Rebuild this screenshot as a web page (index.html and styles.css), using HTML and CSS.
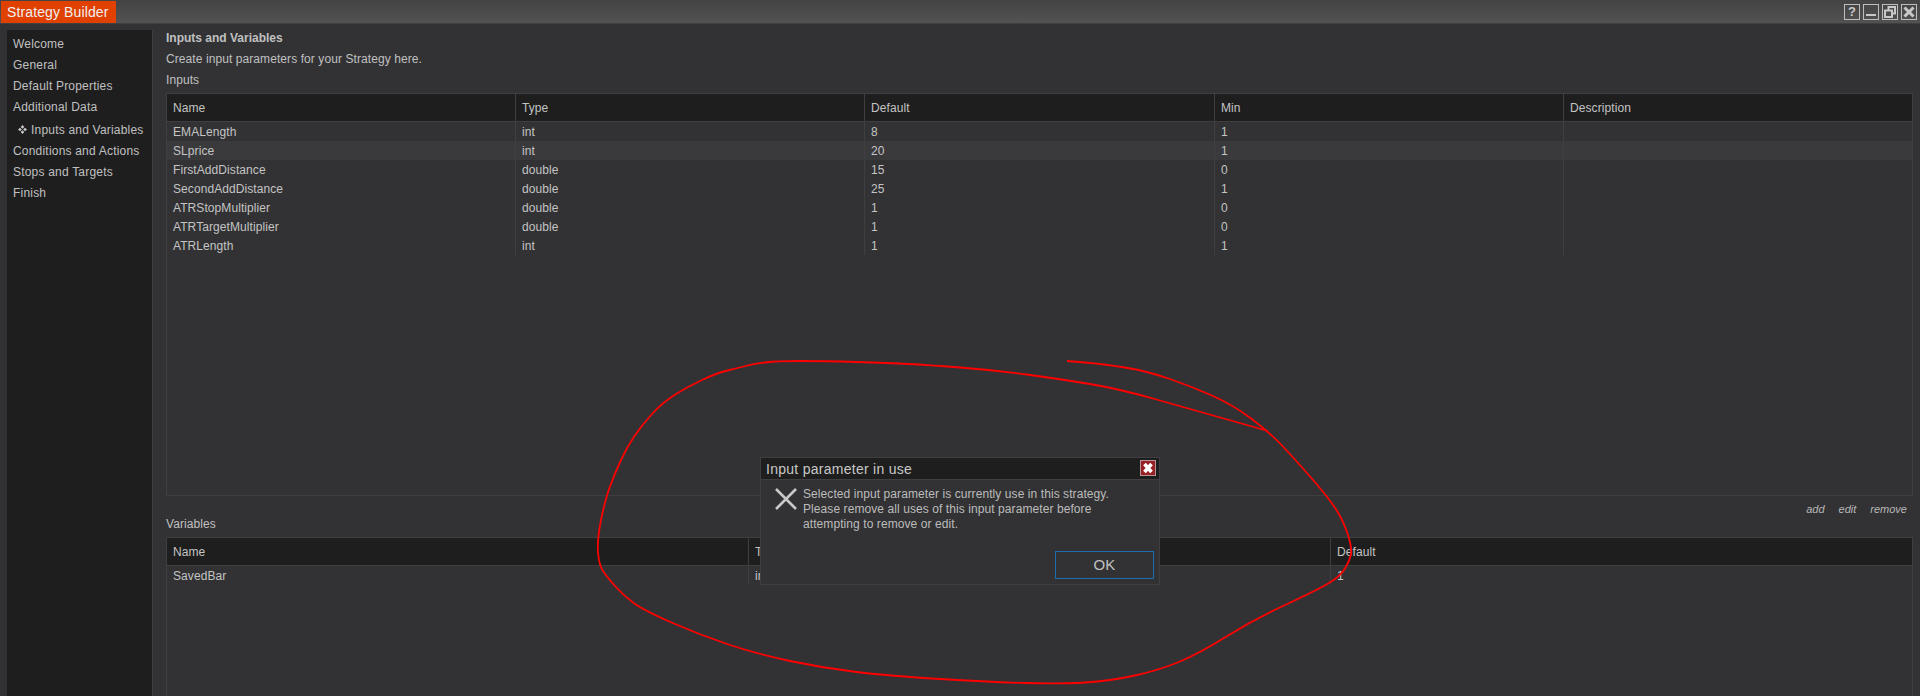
FILE: index.html
```html
<!DOCTYPE html>
<html lang="en">
<head>
<meta charset="utf-8">
<title>Strategy Builder</title>
<link rel="stylesheet" href="styles.css">
</head>
<body>
<div class="window">
  <header class="titlebar">
    <div class="apptab">Strategy Builder</div>
    <div class="winbtns">
      <div class="winbtn help">?</div>
      <div class="winbtn"><svg viewBox="0 0 14 14"><rect x="2" y="9" width="10" height="2" fill="#c8c8c8"/></svg></div>
      <div class="winbtn"><svg viewBox="0 0 14 14"><path d="M5.5 4.5V2H12V8.500H9.500M2 5.500H9V12H2Z" fill="none" stroke="#c8c8c8" stroke-width="2"/></svg></div>
      <div class="winbtn"><svg viewBox="0 0 14 14"><path d="M2.500 2.500L11.500 11.500M11.500 2.500L2.500 11.500" stroke="#c8c8c8" stroke-width="3" fill="none"/></svg></div>
    </div>
  </header>
  <div class="body">
    <nav class="sidebar">
      <div class="navitem">Welcome</div>
      <div class="navitem">General</div>
      <div class="navitem">Default Properties</div>
      <div class="navitem">Additional Data</div>
      <div class="navitem active"><svg class="navicon" viewBox="0 0 9 9"><path d="M4.500 0L6.300 2 4.500 3.800 2.700 2ZM4.500 5.200L6.300 7 4.500 9 2.700 7ZM0 4.500L2 2.700 3.800 4.500 2 6.300ZM5.200 4.500L7 2.700 9 4.500 7 6.300Z" fill="#c8c8c8"/></svg>Inputs and Variables</div>
      <div class="navitem">Conditions and Actions</div>
      <div class="navitem">Stops and Targets</div>
      <div class="navitem">Finish</div>
    </nav>
    <main class="content">
      <div class="heading">Inputs and Variables</div>
      <div class="line">Create input parameters for your Strategy here.</div>
      <div class="line">Inputs</div>
      <section class="table inputs">
        <div class="row head cols5"><div class="cell">Name</div><div class="cell">Type</div><div class="cell">Default</div><div class="cell">Min</div><div class="cell">Description</div></div>
        <div class="row cols5"><div class="cell">EMALength</div><div class="cell">int</div><div class="cell">8</div><div class="cell">1</div><div class="cell"></div></div>
        <div class="row cols5 alt"><div class="cell">SLprice</div><div class="cell">int</div><div class="cell">20</div><div class="cell">1</div><div class="cell"></div></div>
        <div class="row cols5"><div class="cell">FirstAddDistance</div><div class="cell">double</div><div class="cell">15</div><div class="cell">0</div><div class="cell"></div></div>
        <div class="row cols5"><div class="cell">SecondAddDistance</div><div class="cell">double</div><div class="cell">25</div><div class="cell">1</div><div class="cell"></div></div>
        <div class="row cols5"><div class="cell">ATRStopMultiplier</div><div class="cell">double</div><div class="cell">1</div><div class="cell">0</div><div class="cell"></div></div>
        <div class="row cols5"><div class="cell">ATRTargetMultiplier</div><div class="cell">double</div><div class="cell">1</div><div class="cell">0</div><div class="cell"></div></div>
        <div class="row cols5"><div class="cell">ATRLength</div><div class="cell">int</div><div class="cell">1</div><div class="cell">1</div><div class="cell"></div></div>
      </section>
      <div class="actions"><span>add</span><span>edit</span><span>remove</span></div>
      <div class="line">Variables</div>
      <section class="table vars">
        <div class="row head cols3"><div class="cell">Name</div><div class="cell">Type</div><div class="cell">Default</div></div>
        <div class="row cols3"><div class="cell">SavedBar</div><div class="cell">int</div><div class="cell">1</div></div>
      </section>
    </main>
  </div>
</div>
<div class="dialog">
  <div class="dlgtitle">
    <span>Input parameter in use</span>
    <div class="dlgclose"><svg viewBox="0 0 14 14"><path d="M3.500 3L10.500 11M10.500 3L3.500 11" stroke="#fff" stroke-width="3.600" fill="none"/></svg></div>
  </div>
  <div class="dlgbody">
    <svg class="dlgicon" viewBox="0 0 22 22"><path d="M1 1L21 21M21 1L1 21" stroke="#c8c8c8" stroke-width="2.600" fill="none"/></svg>
    <div class="dlgtext">Selected input parameter is currently use in this strategy.<br>Please remove all uses of this input parameter before<br>attempting to remove or edit.</div>
  </div>
  <div class="dlgfoot"><div class="okbtn">OK</div></div>
</div>
<svg class="scribble" viewBox="0 0 1920 696">
  <path d="M1067 361L1085 362.500Q1103 364 1125 367.500Q1147 371 1170 379Q1193 387 1213 396Q1233 405 1250.500 418Q1268 431 1280.500 444Q1293 457 1310.500 477Q1328 497 1335.500 508.500Q1343 520 1347.500 533.500Q1352 547 1351 553.500Q1350 560 1345 568.500Q1340 577 1326.500 584.500Q1313 592 1283 606Q1253 620 1226.500 636.500Q1200 653 1180 661.500Q1160 670 1135 675.500Q1110 681 1085 682.500Q1060 684 1025 683Q990 682 940 679Q890 676 856.500 672Q823 668 790 661Q757 654 728.500 644.500Q700 635 671.500 622.500Q643 610 633 602.500Q623 595 615 586Q607 577 603 571Q599 565 598 552.500Q597 540 601 520Q605 500 610 486.500Q615 473 621 460Q627 447 634.500 436Q642 425 652 414Q662 403 674.500 395Q687 387 702 380Q717 373 727.500 370.500Q738 368 745.500 366Q753 364 765 362.500Q777 361 800 361Q823 361 856.500 362Q890 363 908.500 364Q927 365 960 367.500Q993 370 1026.500 374.500Q1060 379 1090 384Q1120 389 1156.500 399.500Q1193 410 1268 431" fill="none" stroke="#f00" stroke-width="1.800" stroke-linejoin="round"/>
</svg>
</body>
</html>
```

FILE: styles.css
```css
* { box-sizing: border-box; }
html, body { margin: 0; height: 100%; overflow: hidden; }
body { background: #323234; color: #c4c4c4; font: 12px/15px "Liberation Sans", Arial, sans-serif; letter-spacing: .08px; }
.window { height: 696px; display: flex; flex-direction: column; overflow: hidden; }
.titlebar { height: 24px; flex: none; display: flex; justify-content: space-between; padding: 1px 3px 0 1px; background: linear-gradient(#434343, #525252); border-bottom: 1px solid #3f3f41; }
.apptab { width: 115px; height: 22px; background: #e04000; color: #f0f0f0; font-size: 14px; line-height: 22px; padding-left: 6px; letter-spacing: .12px; }
.winbtns { display: flex; gap: 3px; padding-top: 3px; }
.winbtn { width: 16px; height: 16px; border: 1px solid #bdbdbd; color: #c8c8c8; }
.winbtn svg { display: block; width: 14px; height: 14px; }
.help { font: bold 13px/14px "Liberation Sans", sans-serif; text-align: center; }
.body { flex: 1; display: flex; min-height: 0; padding-left: 7px; padding-top: 6px; }
.sidebar { width: 146px; flex: none; background: #1e1e1e; border-right: 1px solid #3f3f41; padding-top: 4px; letter-spacing: .2px; }
.navitem { height: 21px; padding-left: 6px; line-height: 21px; color: #c0c0c0; white-space: nowrap; }
.navitem.active { height: 23px; line-height: 25px; padding-left: 11px; color: #c0c0c0; }
.navicon { width: 9px; height: 9px; margin-right: 4px; margin-bottom: 3px; vertical-align: middle; }
.content { flex: 1; min-width: 0; display: flex; flex-direction: column; padding: 0 7px 0 13px; }
.heading { height: 21px; flex: none; line-height: 16px; font-weight: bold; color: #c0c0c0; letter-spacing: 0; }
.line { height: 21px; flex: none; line-height: 16px; color: #c0c0c0; }
.table { border: 1px solid #3f3f41; flex: none; }
.inputs { height: 403px; }
.vars { height: 170px; border-bottom: 0; }
.row { display: grid; height: 19px; line-height: 21px; }
.cols5 { grid-template-columns: 349px 349px 350px 349px 1fr; }
.cols3 { grid-template-columns: 582px 582px 1fr; }
.row.head { height: 28px; line-height: 29px; background: #1e1e1e; border-bottom: 1px solid #3f3f41; }
.row.alt { background: #3a3a3c; }
.cell { padding-left: 6px; border-right: 1px solid #3f3f41; white-space: nowrap; overflow: hidden; }
.cell:last-child { border-right: 0; }
.actions { height: 20px; flex: none; display: flex; justify-content: flex-end; align-items: flex-end; gap: 14px; padding-right: 6px; font-style: italic; font-size: 11px; line-height: 13px; color: #b8b8b8; letter-spacing: 0; }
.dialog { position: absolute; left: 760px; top: 457px; width: 400px; height: 128px; background: #323234; border: 1px solid #3f3f41; }
.dlgtitle { height: 22px; background: #1e1e1e; border-bottom: 1px solid #3f3f41; display: flex; justify-content: space-between; padding: 2px 3px 0 5px; font-size: 14px; line-height: 18px; color: #c8c8c8; letter-spacing: .27px; }
.dlgclose { width: 16px; height: 16px; background: #9a1f24; border: 1px solid #b09a9a; }
.dlgclose svg { display: block; width: 14px; height: 14px; }
.dlgbody { display: flex; padding: 8px 0 0 14px; gap: 6px; height: 71px; }
.dlgicon { width: 22px; height: 22px; flex: none; }
.dlgtext { line-height: 15px; color: #bcbcbc; margin-top: -1px; }
.dlgfoot { display: flex; justify-content: flex-end; padding-right: 5px; }
.okbtn { width: 99px; height: 28px; border: 1px solid #1a6fb0; text-align: center; font-size: 15px; line-height: 26px; color: #c0c0c0; }
.scribble { position: absolute; left: 0; top: 0; width: 1920px; height: 696px; pointer-events: none; }
```
